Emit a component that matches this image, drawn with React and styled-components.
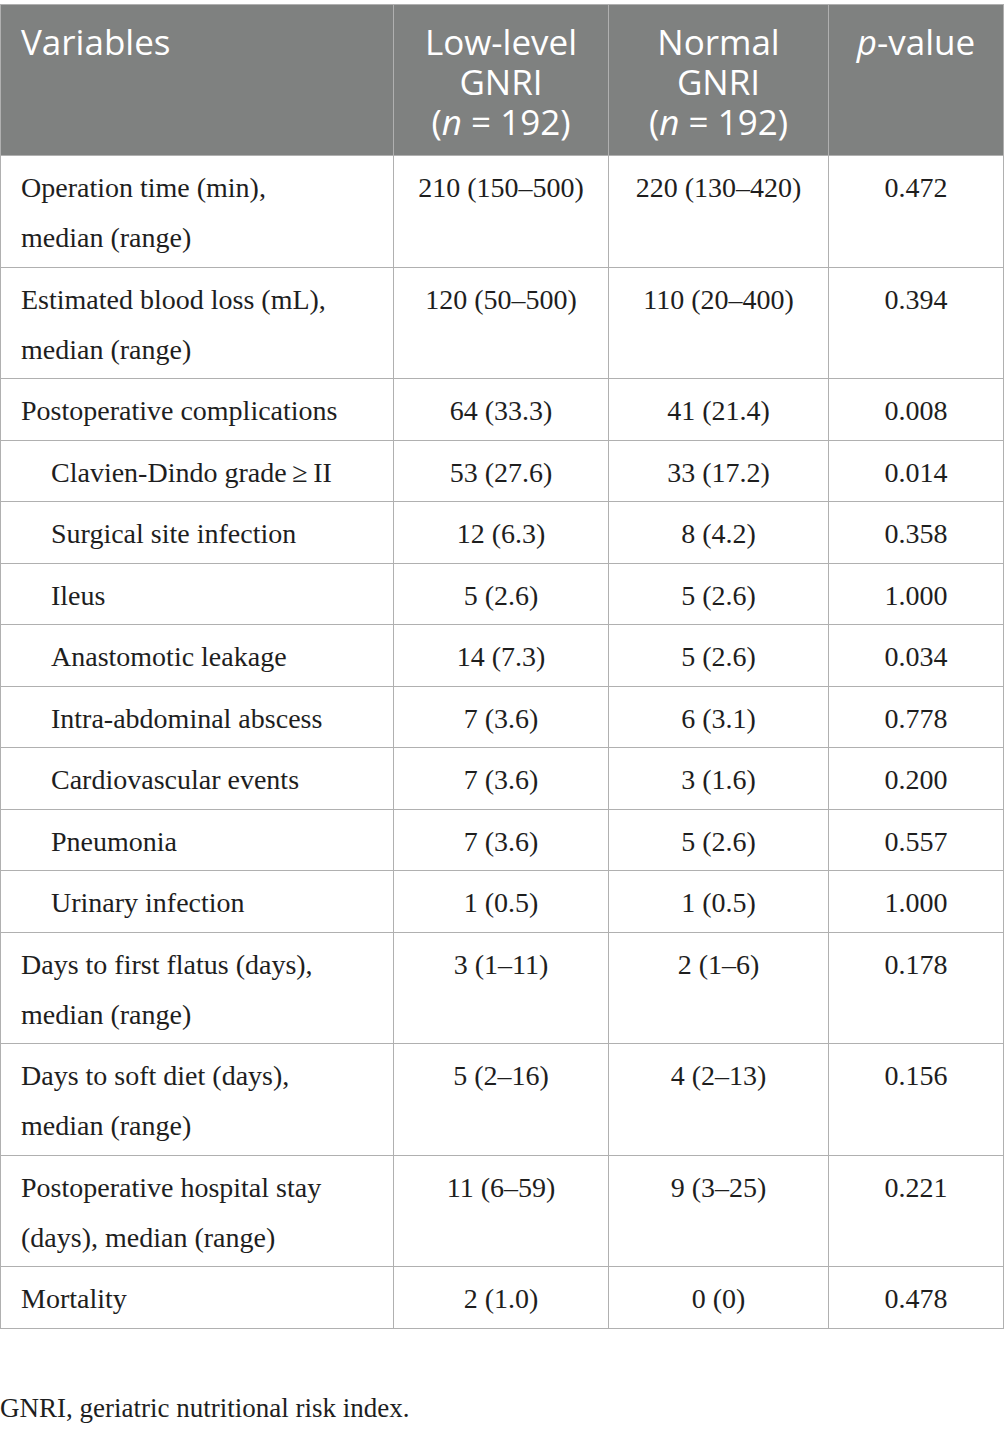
import React from "react";
import styled, { createGlobalStyle } from "styled-components";

const GlobalStyle = createGlobalStyle`
  body {
    margin: 0;
    background: #ffffff;
  }
`;

const rows = [
  { label: ["Operation time (min),", "median (range)"], low: "210 (150–500)", normal: "220 (130–420)", p: "0.472" },
  { label: ["Estimated blood loss (mL),", "median (range)"], low: "120 (50–500)", normal: "110 (20–400)", p: "0.394" },
  { label: ["Postoperative complications"], low: "64 (33.3)", normal: "41 (21.4)", p: "0.008" },
  { label: ["Clavien-Dindo grade\u2009≥\u2009II"], sub: true, low: "53 (27.6)", normal: "33 (17.2)", p: "0.014" },
  { label: ["Surgical site infection"], sub: true, low: "12 (6.3)", normal: "8 (4.2)", p: "0.358" },
  { label: ["Ileus"], sub: true, low: "5 (2.6)", normal: "5 (2.6)", p: "1.000" },
  { label: ["Anastomotic leakage"], sub: true, low: "14 (7.3)", normal: "5 (2.6)", p: "0.034" },
  { label: ["Intra-abdominal abscess"], sub: true, low: "7 (3.6)", normal: "6 (3.1)", p: "0.778" },
  { label: ["Cardiovascular events"], sub: true, low: "7 (3.6)", normal: "3 (1.6)", p: "0.200" },
  { label: ["Pneumonia"], sub: true, low: "7 (3.6)", normal: "5 (2.6)", p: "0.557" },
  { label: ["Urinary infection"], sub: true, low: "1 (0.5)", normal: "1 (0.5)", p: "1.000" },
  { label: ["Days to first flatus (days),", "median (range)"], low: "3 (1–11)", normal: "2 (1–6)", p: "0.178" },
  { label: ["Days to soft diet (days),", "median (range)"], low: "5 (2–16)", normal: "4 (2–13)", p: "0.156" },
  { label: ["Postoperative hospital stay", "(days), median (range)"], low: "11 (6–59)", normal: "9 (3–25)", p: "0.221" },
  { label: ["Mortality"], low: "2 (1.0)", normal: "0 (0)", p: "0.478" },
];

export default function App() {
  return (
    <Page>
      <GlobalStyle />
      <Table>
        <colgroup>
          <col style={{ width: 393 }} />
          <col style={{ width: 215 }} />
          <col style={{ width: 220 }} />
          <col />
        </colgroup>
        <thead>
          <tr>
            <HeadCell>Variables</HeadCell>
            <HeadCell center>
              Low-level<br />GNRI<br />(<i>n</i>&nbsp;=&nbsp;192)
            </HeadCell>
            <HeadCell center>
              Normal<br />GNRI<br />(<i>n</i>&nbsp;=&nbsp;192)
            </HeadCell>
            <HeadCell center>
              <i>p</i>-value
            </HeadCell>
          </tr>
        </thead>
        <tbody>
          {rows.map((r, i) => (
            <tr key={i}>
              <LabelCell sub={r.sub}>
                {r.label.map((l, j) => (
                  <React.Fragment key={j}>
                    {j > 0 && <br />}
                    {l}
                  </React.Fragment>
                ))}
              </LabelCell>
              <ValueCell>{r.low}</ValueCell>
              <ValueCell>{r.normal}</ValueCell>
              <ValueCell>{r.p}</ValueCell>
            </tr>
          ))}
        </tbody>
      </Table>
      <Footnote>GNRI, geriatric nutritional risk index.</Footnote>
    </Page>
  );
}

const Page = styled.div`
  width: 1004px;
  padding-top: 4px;
  font-family: "Liberation Serif", "DejaVu Serif", serif;
  color: #1e1e1e;
`;

const Table = styled.table`
  width: 1004px;
  border-collapse: collapse;
  table-layout: fixed;
`;

const HeadCell = styled.th`
  background: #7f8180;
  color: #ffffff;
  font-family: "Open Sans", "Lato", sans-serif;
  font-weight: 400;
  font-size: 35px;
  line-height: 40px;
  text-align: ${(p) => (p.center ? "center" : "left")};
  vertical-align: top;
  padding: ${(p) => (p.center ? "17px 4px 13px 4px" : "17px 12px 13px 20px")};
  border: 1px solid #b0b0b0;
  white-space: nowrap;

  i {
    font-style: italic;
  }
`;

const Cell = styled.td`
  font-size: 28px;
  line-height: 50px;
  vertical-align: top;
  border: 1px solid #b0b0b0;
  padding: 7px 20px 3.5px 20px;
`;

const LabelCell = styled(Cell)`
  text-align: left;
  padding-left: ${(p) => (p.sub ? "50px" : "20px")};
  white-space: nowrap;
`;

const ValueCell = styled(Cell)`
  text-align: center;
  padding-left: 8px;
  padding-right: 8px;
`;

const Footnote = styled.p`
  margin: 62px 0 0;
  font-size: 27px;
  line-height: 34px;
`;
